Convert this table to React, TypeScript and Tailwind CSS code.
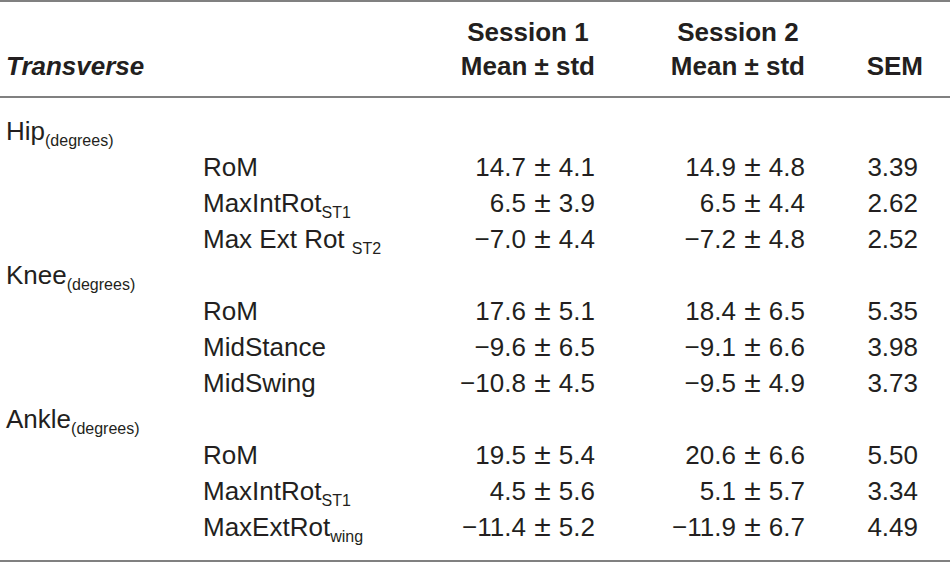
type SubRow = { label: string; sub?: string; subSpace?: boolean; s1: string; s2: string; sem: string };
type Group = { name: string; rows: SubRow[] };

const groups: Group[] = [
  {
    name: "Hip",
    rows: [
      { label: "RoM", s1: "14.7 ± 4.1", s2: "14.9 ± 4.8", sem: "3.39" },
      { label: "MaxIntRot", sub: "ST1", s1: "6.5 ± 3.9", s2: "6.5 ± 4.4", sem: "2.62" },
      { label: "Max Ext Rot", sub: "ST2", subSpace: true, s1: "−7.0 ± 4.4", s2: "−7.2 ± 4.8", sem: "2.52" },
    ],
  },
  {
    name: "Knee",
    rows: [
      { label: "RoM", s1: "17.6 ± 5.1", s2: "18.4 ± 6.5", sem: "5.35" },
      { label: "MidStance", s1: "−9.6 ± 6.5", s2: "−9.1 ± 6.6", sem: "3.98" },
      { label: "MidSwing", s1: "−10.8 ± 4.5", s2: "−9.5 ± 4.9", sem: "3.73" },
    ],
  },
  {
    name: "Ankle",
    rows: [
      { label: "RoM", s1: "19.5 ± 5.4", s2: "20.6 ± 6.6", sem: "5.50" },
      { label: "MaxIntRot", sub: "ST1", s1: "4.5 ± 5.6", s2: "5.1 ± 5.7", sem: "3.34" },
      { label: "MaxExtRot", sub: "wing", s1: "−11.4 ± 5.2", s2: "−11.9 ± 6.7", sem: "4.49" },
    ],
  },
];

const cols = "grid grid-cols-[203px_252px_140px_210px_145px]";

function Sub({ children }: { children: string }) {
  return <span className="relative top-[6px] text-[16px]">{children}</span>;
}

function Value({ text }: { text: string }) {
  const [mean, std] = text.split(" ± ");
  return (
    <>
      {mean} <span className="mx-[1px] text-[30px] leading-none">±</span> {std}
    </>
  );
}

export default function App() {
  return (
    <div
      className="w-[950px] h-[563px] bg-white text-[#231f20] text-[26px]"
      style={{ fontFamily: '"Liberation Sans", Arial, sans-serif' }}
    >
      <div className="border-t-2 border-[#808080]" />
      <div className={`${cols} pt-[13px] pb-[13px] leading-[34px] border-b-2 border-[#808080] font-bold`}>
        <div className="col-span-2 self-end pl-[6px] italic">Transverse</div>
        <div className="text-right">
          <span className="inline-block text-center">
            Session 1
            <br />
            Mean ± std
          </span>
        </div>
        <div className="text-right">
          <span className="inline-block text-center">
            Session 2
            <br />
            Mean ± std
          </span>
        </div>
        <div className="self-end pr-[27px] text-right">SEM</div>
      </div>
      <div className="pt-[14px] pb-[16px] border-b-2 border-[#808080]">
        {groups.map((g) => (
          <div key={g.name}>
            <div className={`${cols} h-[36px] items-center`}>
              <div className="col-span-5 pl-[6px] whitespace-nowrap">
                {g.name}
                <Sub>(degrees)</Sub>
              </div>
            </div>
            {g.rows.map((r) => (
              <div key={g.name + r.label} className={`${cols} h-[36px] items-center`}>
                <div />
                <div className="whitespace-nowrap">
                  {r.label}
                  {r.subSpace ? " " : ""}
                  {r.sub ? <Sub>{r.sub}</Sub> : null}
                </div>
                <div className="text-right whitespace-nowrap">
                  <Value text={r.s1} />
                </div>
                <div className="text-right whitespace-nowrap">
                  <Value text={r.s2} />
                </div>
                <div className="pr-[32px] text-right">{r.sem}</div>
              </div>
            ))}
          </div>
        ))}
      </div>
    </div>
  );
}
